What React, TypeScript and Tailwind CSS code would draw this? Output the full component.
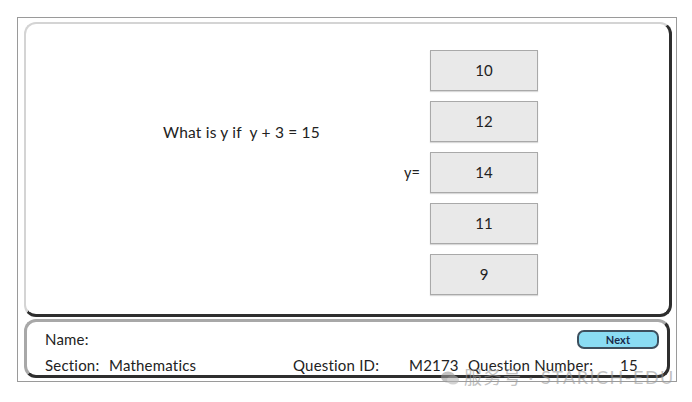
import React from "react";

const answers = ["10", "12", "14", "11", "9"];

const font = { fontFamily: "Lato, 'Noto Sans', 'Noto Sans CJK SC', sans-serif" };

const App = () => {
  return (
    <div className="w-[692px] h-[402px] bg-white relative" style={font}>
      <div className="absolute left-[17px] top-[17px] w-[660px] h-[365px] border border-[#9a9a9a] bg-white px-[6px] pt-[4px]">
        {/* question panel */}
        <div className="h-[295px] w-[648px] rounded-[12px] border-l-2 border-t-2 border-[#d4d4d4] border-r-[3px] border-b-[3px] border-r-[#2e2e2e] border-b-[#2e2e2e] flex">
          <div className="w-[378px] pl-[137px] pt-[97px] text-[15.5px] tracking-[0.2px] text-[#222] whitespace-pre">
            What is y if  y + 3 = 15
          </div>
          <div className="flex flex-col gap-[10px] pt-[26px]">
            {answers.map((a, i) => (
              <div key={i} className="flex items-center">
                <div className="w-[26px] text-[14.5px] text-[#222]">{i === 2 ? "y=" : ""}</div>
                <div className="w-[108px] h-[41px] bg-[#e9e9e9] border border-[#a9a9a9] flex items-center justify-center text-[15px] text-[#222] shadow-[0_1px_1px_rgba(0,0,0,0.15)]">
                  {a}
                </div>
              </div>
            ))}
          </div>
        </div>
        {/* info panel */}
        <div className="mt-[2px] h-[59px] w-[646px] rounded-[12px] border-l-[3px] border-t-[3px] border-[#a8a8a8] border-r-[3px] border-b-[3px] border-r-[#2e2e2e] border-b-[#2e2e2e] pl-[18px] pr-[6px] pt-[6px] text-[15px] tracking-[0.2px] text-[#222]">
          <div className="flex items-center h-[22px]">
            <span>Name:</span>
            <div className="flex-1" />
            <button className="w-[82px] h-[19px] rounded-[7px] bg-[#8adcf3] border-2 border-[#3d4f5e] text-[11px] font-bold text-[#1a2a4a] leading-none mr-[2px]">
              Next
            </button>
          </div>
          <div className="flex items-center h-[31px]">
            <span className="w-[64px]">Section:</span>
            <span className="w-[184px]">Mathematics</span>
            <span className="w-[116px]">Question ID:</span>
            <span className="w-[59px]">M2173</span>
            <span className="w-[152px]">Question Number:</span>
            <span>15</span>
          </div>
        </div>
      </div>
      {/* watermark */}
      <div className="absolute left-[440px] top-[364px] flex items-center gap-[4px] text-[18px] tracking-[1.5px] text-[#9a9a9a] opacity-60 pointer-events-none">
        <svg width="20" height="16" viewBox="0 0 20 16">
          <ellipse cx="8" cy="7" rx="7" ry="5.5" fill="#9a9a9a" />
          <ellipse cx="13" cy="10" rx="6" ry="4.5" fill="#b5b5b5" />
        </svg>
        <span>服务号 · STARICH-EDU</span>
      </div>
    </div>
  );
};

export default App;
